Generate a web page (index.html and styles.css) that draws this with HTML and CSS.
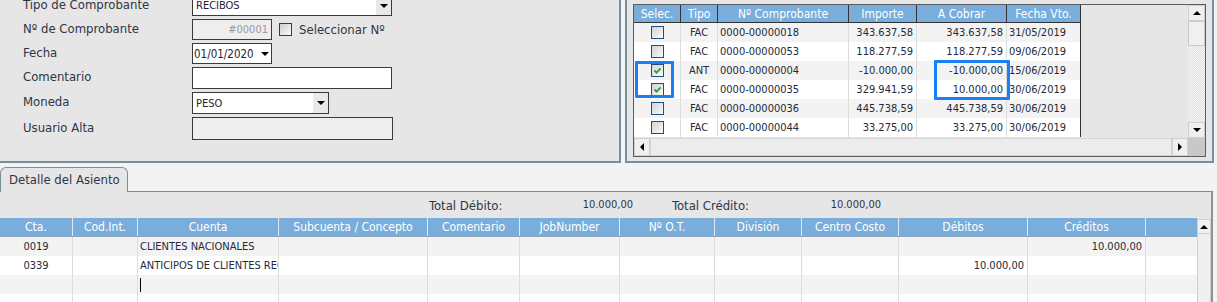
FILE: index.html
```html
<!DOCTYPE html>
<html lang="es">
<head>
<meta charset="utf-8">
<title>Recibos</title>
<link rel="stylesheet" href="styles.css">
</head>
<body>
<div class="top">
  <section class="form-panel">
    <div class="form">
      <div class="frow h21">
        <label>Tipo de Comprobante</label>
        <div class="field select w200"><span>RECIBOS</span><span class="dbtn"><i class="tri-down"></i></span></div>
      </div>
      <div class="frow h21">
        <label>Nº de Comprobante</label>
        <div class="field ro w80 num">#00001</div>
        <span class="cbox"></span>
        <span class="cblabel">Seleccionar Nº</span>
      </div>
      <div class="frow h21">
        <label>Fecha</label>
        <div class="field select w80 date"><span>01/01/2020</span><span class="dbtn white"><i class="tri-down"></i></span></div>
      </div>
      <div class="frow h22">
        <label>Comentario</label>
        <div class="field w200"></div>
      </div>
      <div class="frow h22">
        <label>Moneda</label>
        <div class="field select w137"><span>PESO</span><span class="dbtn"><i class="tri-down"></i></span></div>
      </div>
      <div class="frow h23">
        <label>Usuario Alta</label>
        <div class="field ro w201"></div>
      </div>
    </div>
  </section>

  <section class="list-panel">
    <div class="gridbox">
      <div class="gridmain">
        <div class="tablewrap">
          <div class="trow thead">
            <div class="cell">Selec.</div>
            <div class="cell">Tipo</div>
            <div class="cell">Nº Comprobante</div>
            <div class="cell">Importe</div>
            <div class="cell">A Cobrar</div>
            <div class="cell">Fecha Vto.</div>
          </div>
          <div class="trow odd">
            <div class="cell c"><span class="gcheck"></span></div>
            <div class="cell c">FAC</div>
            <div class="cell l">0000-00000018</div>
            <div class="cell r">343.637,58</div>
            <div class="cell r">343.637,58</div>
            <div class="cell l">31/05/2019</div>
          </div>
          <div class="trow">
            <div class="cell c"><span class="gcheck"></span></div>
            <div class="cell c">FAC</div>
            <div class="cell l">0000-00000053</div>
            <div class="cell r">118.277,59</div>
            <div class="cell r">118.277,59</div>
            <div class="cell l">09/06/2019</div>
          </div>
          <div class="trow odd">
            <div class="cell c"><span class="gcheck"><svg viewBox="0 0 11 11" width="11" height="11"><path d="M2.5 5.5 L4.6 7.6 L8.6 3.4" fill="none" stroke="#2f9e34" stroke-width="1.8"/></svg></span></div>
            <div class="cell c">ANT</div>
            <div class="cell l">0000-00000004</div>
            <div class="cell r">-10.000,00</div>
            <div class="cell r">-10.000,00</div>
            <div class="cell l">15/06/2019</div>
          </div>
          <div class="trow">
            <div class="cell c"><span class="gcheck"><svg viewBox="0 0 11 11" width="11" height="11"><path d="M2.5 5.5 L4.6 7.6 L8.6 3.4" fill="none" stroke="#2f9e34" stroke-width="1.8"/></svg></span></div>
            <div class="cell c">FAC</div>
            <div class="cell l">0000-00000035</div>
            <div class="cell r">329.941,59</div>
            <div class="cell r">10.000,00</div>
            <div class="cell l">30/06/2019</div>
          </div>
          <div class="trow odd">
            <div class="cell c"><span class="gcheck"></span></div>
            <div class="cell c">FAC</div>
            <div class="cell l">0000-00000036</div>
            <div class="cell r">445.738,59</div>
            <div class="cell r">445.738,59</div>
            <div class="cell l">30/06/2019</div>
          </div>
          <div class="trow">
            <div class="cell c"><span class="gcheck"></span></div>
            <div class="cell c">FAC</div>
            <div class="cell l">0000-00000044</div>
            <div class="cell r">33.275,00</div>
            <div class="cell r">33.275,00</div>
            <div class="cell l">30/06/2019</div>
          </div>
          <div class="hl hl1"></div>
          <div class="hl hl2"></div>
        </div>
        <div class="vscroll">
          <div class="sbtn vb"><i class="tri-up"></i></div>
          <div class="thumb"></div>
          <div class="dither"></div>
          <div class="sbtn vb"><i class="tri-down"></i></div>
        </div>
      </div>
      <div class="hscroll">
        <div class="sbtn hb"><i class="tri-left"></i></div>
        <div class="htrack"></div>
        <div class="sbtn hb"><i class="tri-right"></i></div>
        <div class="corner"></div>
      </div>
    </div>
  </section>
</div>

<div class="tabs">
  <div class="tab">Detalle del Asiento</div>
  <div class="tabfill"></div>
</div>

<section class="detail">
  <div class="totals">
    <span class="tl">Total Débito:</span>
    <span class="tv">10.000,00</span>
    <span class="tl tl2">Total Crédito:</span>
    <span class="tv">10.000,00</span>
  </div>
  <div class="dgrid">
    <div class="dtable">
      <div class="drow dhead">
        <div class="cell">Cta.</div>
        <div class="cell">Cod.Int.</div>
        <div class="cell">Cuenta</div>
        <div class="cell">Subcuenta / Concepto</div>
        <div class="cell">Comentario</div>
        <div class="cell">JobNumber</div>
        <div class="cell">Nº O.T.</div>
        <div class="cell">División</div>
        <div class="cell">Centro Costo</div>
        <div class="cell">Débitos</div>
        <div class="cell">Créditos</div>
        <div class="cell"></div>
      </div>
      <div class="drow odd">
        <div class="cell c">0019</div>
        <div class="cell"></div>
        <div class="cell l">CLIENTES NACIONALES</div>
        <div class="cell"></div>
        <div class="cell"></div>
        <div class="cell"></div>
        <div class="cell"></div>
        <div class="cell"></div>
        <div class="cell"></div>
        <div class="cell"></div>
        <div class="cell r">10.000,00</div>
        <div class="cell"></div>
      </div>
      <div class="drow">
        <div class="cell c">0339</div>
        <div class="cell"></div>
        <div class="cell l">ANTICIPOS DE CLIENTES RECIBIDOS</div>
        <div class="cell"></div>
        <div class="cell"></div>
        <div class="cell"></div>
        <div class="cell"></div>
        <div class="cell"></div>
        <div class="cell"></div>
        <div class="cell r">10.000,00</div>
        <div class="cell"></div>
        <div class="cell"></div>
      </div>
      <div class="drow odd">
        <div class="cell"></div>
        <div class="cell"></div>
        <div class="cell l"><span class="caret"></span></div>
        <div class="cell"></div>
        <div class="cell"></div>
        <div class="cell"></div>
        <div class="cell"></div>
        <div class="cell"></div>
        <div class="cell"></div>
        <div class="cell"></div>
        <div class="cell"></div>
        <div class="cell"></div>
      </div>
      <div class="drow">
        <div class="cell"></div>
        <div class="cell"></div>
        <div class="cell"></div>
        <div class="cell"></div>
        <div class="cell"></div>
        <div class="cell"></div>
        <div class="cell"></div>
        <div class="cell"></div>
        <div class="cell"></div>
        <div class="cell"></div>
        <div class="cell"></div>
        <div class="cell"></div>
      </div>
    </div>
    <div class="dscroll">
      <div class="sbtn dbtn-up"><i class="tri-up"></i></div>
      <div class="dtrack"></div>
    </div>
  </div>
</section>
</body>
</html>
```

FILE: styles.css
```css
* { box-sizing: border-box; }
html, body { margin: 0; padding: 0; }
body {
  width: 1217px;
  height: 302px;
  overflow: hidden;
  background: #f3f3f3;
  font-family: "DejaVu Sans Condensed", "DejaVu Sans", "Liberation Sans", sans-serif;
  color: #2f3545;
}

/* ---------- top area ---------- */
.top { display: flex; gap: 4px; height: 163px; }

.form-panel {
  width: 621px;
  background: #e6e6e6;
  border-right: 2px solid #7b8f98;
  border-bottom: 2px solid #7b8f98;
  overflow: hidden;
}
.form {
  display: flex;
  flex-direction: column;
  gap: 3px;
  margin-top: -5px;
  padding-left: 23px;
}
.frow { display: flex; align-items: center; }
.h21 { height: 21px; }
.h22 { height: 22px; }
.h23 { height: 23px; }
.frow label {
  width: 169px;
  font-size: 13px;
  padding-bottom: 3px;
  white-space: nowrap;
}
.field {
  height: 100%;
  border: 1px solid #3a3a3a;
  background: #fff;
  font-size: 11px;
  display: flex;
  align-items: center;
  color: #1f2430;
}
.w80 { width: 80px; }
.w137 { width: 137px; }
.w200 { width: 200px; }
.w201 { width: 201px; }
.ro { background: #eeeeee; }
.num { justify-content: flex-end; padding-right: 3px; color: #9a9a9a; }
.select { justify-content: space-between; padding-left: 3px; }
.date { padding-left: 1px; font-size: 11.5px; }
.dbtn {
  width: 15px;
  height: 100%;
  background: #e9e9e9;
  display: flex;
  align-items: center;
  justify-content: center;
}
.dbtn.white { background: #fff; width: 13px; }

.cbox {
  width: 13px;
  height: 13px;
  margin-left: 7px;
  border: 1px solid #3b3b3b;
  background: linear-gradient(135deg, #cdcdcd, #fbfbfb);
}
.cblabel { margin-left: 7px; font-size: 13px; padding-bottom: 1px; }

/* triangles */
.tri-down, .tri-up, .tri-left, .tri-right { display: block; width: 0; height: 0; }
.tri-down { border-left: 4px solid transparent; border-right: 4px solid transparent; border-top: 4px solid #000; }
.tri-up { border-left: 4px solid transparent; border-right: 4px solid transparent; border-bottom: 4px solid #000; }
.tri-left { border-top: 4px solid transparent; border-bottom: 4px solid transparent; border-right: 4px solid #000; }
.tri-right { border-top: 4px solid transparent; border-bottom: 4px solid transparent; border-left: 4px solid #000; }

/* ---------- list panel ---------- */
.list-panel {
  width: 589px;
  background: #e6e6e6;
  border: 2px solid #7b8f98;
  border-top: none;
  padding: 4px 6px 0 6px;
}
.gridbox {
  height: 153px;
  border: 1px solid #5c5c5c;
  display: flex;
  flex-direction: column;
}
.gridmain { display: flex; height: 133px; }
.tablewrap { flex: 1; position: relative; background: #e6e6e6; overflow: hidden; }

.trow {
  display: grid;
  grid-template-columns: 47px 37px 131px 68px 90px 73px;
  width: 447px;
  height: 19px;
  font-size: 11px;
  background: #ffffff;
  border-right: 1px solid #333;
  color: #232a38;
}
.trow.odd { background: #f3f3f3; }
.cell {
  display: flex;
  align-items: center;
  overflow: hidden;
  white-space: nowrap;
  border-right: 1px solid #dcdcdc;
}
.cell:last-child { border-right: none; }
.c { justify-content: center; }
.l { padding-left: 2px; }
.r { justify-content: flex-end; padding-right: 3px; }

.thead {
  height: 18px;
  background: #79addb;
  color: #fff;
  font-size: 12px;
  border-bottom: 1px solid #333;
}
.thead .cell { justify-content: center; border-right: 1px solid #333; }
.thead .cell:last-child { border-right: none; }

.gcheck {
  width: 13px;
  height: 13px;
  border: 1px solid #1f4f7c;
  background: linear-gradient(135deg, #d2d2d2, #fbfbfb);
  display: flex;
  align-items: center;
  justify-content: center;
}
.gcheck svg { display: block; }

.hl {
  position: absolute;
  border: 3px solid #1a7ff2;
  border-radius: 1px;
}
.hl1 { left: 1px; top: 56px; width: 39px; height: 37px; }
.hl2 { left: 300px; top: 55px; width: 76px; height: 40px; }

.vscroll { width: 17px; display: flex; flex-direction: column; }
.sbtn {
  background: #f0f0f0;
  border: 1px solid #cfcfcf;
  display: flex;
  align-items: center;
  justify-content: center;
}
.vb { height: 16px; }
.thumb { height: 25px; background: #f0f0f0; border: 1px solid #c8c8c8; }
.dither {
  flex: 1;
  background-color: #f4f4f4;
  background-image: repeating-conic-gradient(#e0e0e0 0 25%, #f6f6f6 0 50%);
  background-size: 2px 2px;
}

.hscroll { height: 18px; display: flex; }
.hb { width: 16px; }
.htrack { flex: 1; background: #ececec; border: 1px solid #d4d4d4; }
.corner { width: 17px; background: #c8c8c8; }

/* ---------- tabs ---------- */
.tabs { display: flex; margin-top: 4px; height: 25px; width: 1213px; }
.tab {
  width: 128px;
  border: 1px solid #7b8f98;
  border-bottom: none;
  border-radius: 6px 6px 0 0;
  background: #e6e6e6;
  font-size: 13px;
  display: flex;
  align-items: center;
  padding: 0 0 1px 8px;
  white-space: nowrap;
}
.tabfill { flex: 1; border-bottom: 1px solid #7b8f98; }

/* ---------- detail ---------- */
.detail {
  width: 1213px;
  height: 110px;
  background: #e6e6e6;
  border-right: 2px solid #8a949a;
}
.totals {
  height: 26px;
  display: flex;
  align-items: center;
  padding-left: 429px;
  font-size: 13px;
}
.tl { width: 143px; }
.tl2 { margin-left: 39px; width: 148px; }
.tv { width: 61px; text-align: right; font-size: 11px; padding-bottom: 2px; }

.dgrid { display: flex; height: 84px; }
.dtable { width: 1197px; }
.drow {
  display: grid;
  grid-template-columns: 73px 65px 141px 149px 92px 100px 95px 87px 97px 129px 118px 51px;
  height: 19px;
  font-size: 11px;
  background: #fff;
  color: #232a38;
}
.drow.odd { background: #f3f3f3; }
.drow .cell:last-child { border-right: none; }
.dhead {
  background: #79addb;
  color: #fff;
  font-size: 12px;
  border-bottom: 1px solid #8ea3b5;
}
.dhead .cell { justify-content: center; border-right: 1px solid #dfe9f3; }
.caret { display: block; width: 1px; height: 14px; background: #000; }

.dscroll { width: 14px; display: flex; flex-direction: column; }
.dbtn-up { height: 15px; margin-top: 1px; }
.dtrack { flex: 1; background: #efefef; border-left: 1px solid #d0d0d0; border-right: 1px solid #d0d0d0; }
```
